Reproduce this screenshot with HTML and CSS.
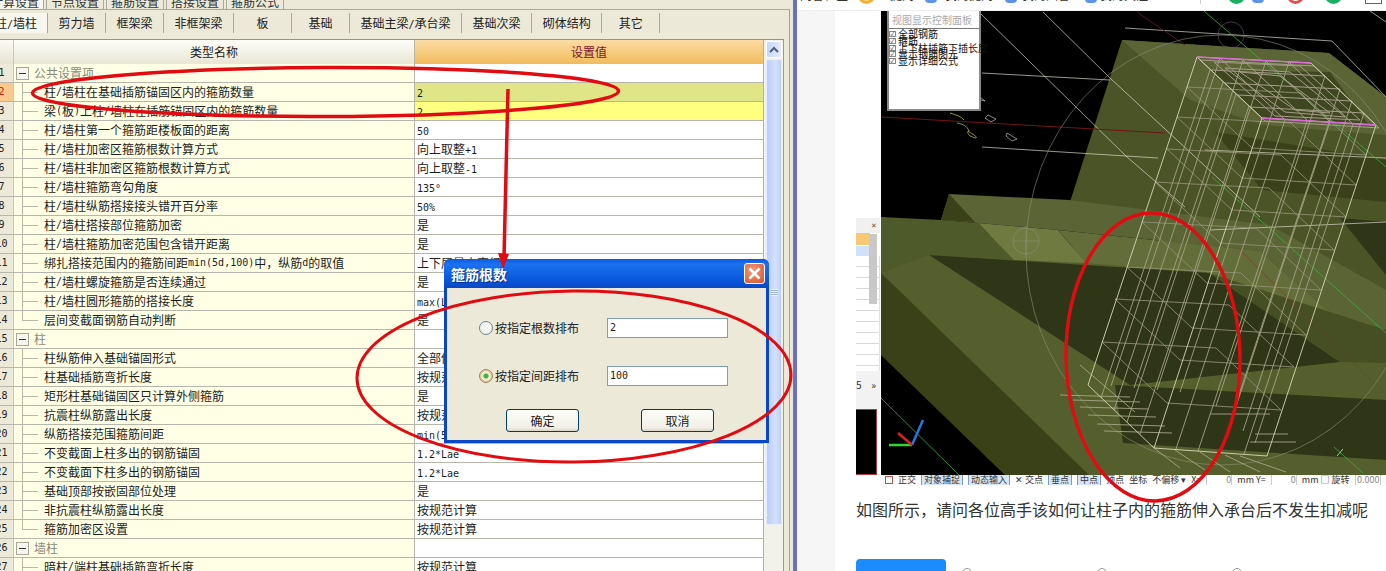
FILE: index.html
```html
<!DOCTYPE html>
<html lang="zh">
<head>
<meta charset="utf-8">
<title>箍筋根数</title>
<link rel="stylesheet" href="styles.css">
</head>
<body>
<div class="page">
  <section class="app">
    <nav class="top-tabs">
      <span class="top-tab on">计算设置</span><span class="top-tab">节点设置</span><span class="top-tab">箍筋设置</span><span class="top-tab">搭接设置</span><span class="top-tab">箍筋公式</span>
    </nav>
    <div class="pane">
      <nav class="sub-tabs">
        <span class="sub-tab on">柱<i class="lat">/</i>墙柱</span><span class="sub-tab">剪力墙</span><span class="sub-tab">框架梁</span><span class="sub-tab">非框架梁</span><span class="sub-tab">板</span><span class="sub-tab">基础</span><span class="sub-tab">基础主梁<i class="lat">/</i>承台梁</span><span class="sub-tab">基础次梁</span><span class="sub-tab">砌体结构</span><span class="sub-tab">其它</span>
      </nav>
      <div class="frame">
        <div class="grid-wrap">
          <div class="row head"><div class="num"></div><div class="name">类型名称</div><div class="val">设置值</div></div>
          <div class="row group"><div class="num">1</div><div class="name"><b class="box"></b>公共设置项</div><div class="val"></div></div>
          <div class="row sel"><div class="num">2</div><div class="name"><b class="tree"></b>柱<i class="lat">/</i>墙柱在基础插筋锚固区内的箍筋数量</div><div class="val"><i class="lat">2</i></div></div>
          <div class="row edit"><div class="num">3</div><div class="name"><b class="tree"></b>梁<i class="lat">(</i>板<i class="lat">)</i>上柱<i class="lat">/</i>墙柱在插筋锚固区内的箍筋数量</div><div class="val"><i class="lat">2</i></div></div>
          <div class="row"><div class="num">4</div><div class="name"><b class="tree"></b>柱<i class="lat">/</i>墙柱第一个箍筋距楼板面的距离</div><div class="val"><i class="lat">50</i></div></div>
          <div class="row"><div class="num">5</div><div class="name"><b class="tree"></b>柱<i class="lat">/</i>墙柱加密区箍筋根数计算方式</div><div class="val">向上取整<i class="lat">+1</i></div></div>
          <div class="row"><div class="num">6</div><div class="name"><b class="tree"></b>柱<i class="lat">/</i>墙柱非加密区箍筋根数计算方式</div><div class="val">向上取整<i class="lat">-1</i></div></div>
          <div class="row"><div class="num">7</div><div class="name"><b class="tree"></b>柱<i class="lat">/</i>墙柱箍筋弯勾角度</div><div class="val"><i class="lat">135°</i></div></div>
          <div class="row"><div class="num">8</div><div class="name"><b class="tree"></b>柱<i class="lat">/</i>墙柱纵筋搭接接头错开百分率</div><div class="val"><i class="lat">50%</i></div></div>
          <div class="row"><div class="num">9</div><div class="name"><b class="tree"></b>柱<i class="lat">/</i>墙柱搭接部位箍筋加密</div><div class="val">是</div></div>
          <div class="row"><div class="num">10</div><div class="name"><b class="tree"></b>柱<i class="lat">/</i>墙柱箍筋加密范围包含错开距离</div><div class="val">是</div></div>
          <div class="row"><div class="num">11</div><div class="name"><b class="tree"></b>绑扎搭接范围内的箍筋间距<i class="lat">min(5d,100)</i>中，纵筋<i class="lat">d</i>的取值</div><div class="val">上下层最小直径</div></div>
          <div class="row"><div class="num">12</div><div class="name"><b class="tree"></b>柱<i class="lat">/</i>墙柱螺旋箍筋是否连续通过</div><div class="val">是</div></div>
          <div class="row"><div class="num">13</div><div class="name"><b class="tree"></b>柱<i class="lat">/</i>墙柱圆形箍筋的搭接长度</div><div class="val"><i class="lat">max(Lae,300)</i></div></div>
          <div class="row"><div class="num">14</div><div class="name"><b class="tree last"></b>层间变截面钢筋自动判断</div><div class="val">是</div></div>
          <div class="row group"><div class="num">15</div><div class="name"><b class="box"></b>柱</div><div class="val"></div></div>
          <div class="row"><div class="num">16</div><div class="name"><b class="tree"></b>柱纵筋伸入基础锚固形式</div><div class="val">全部伸入基础底</div></div>
          <div class="row"><div class="num">17</div><div class="name"><b class="tree"></b>柱基础插筋弯折长度</div><div class="val">按规范计算</div></div>
          <div class="row"><div class="num">18</div><div class="name"><b class="tree"></b>矩形柱基础锚固区只计算外侧箍筋</div><div class="val">是</div></div>
          <div class="row"><div class="num">19</div><div class="name"><b class="tree"></b>抗震柱纵筋露出长度</div><div class="val">按规范计算</div></div>
          <div class="row"><div class="num">20</div><div class="name"><b class="tree"></b>纵筋搭接范围箍筋间距</div><div class="val"><i class="lat">min(5d,100)</i></div></div>
          <div class="row"><div class="num">21</div><div class="name"><b class="tree"></b>不变截面上柱多出的钢筋锚固</div><div class="val"><i class="lat">1.2*Lae</i></div></div>
          <div class="row"><div class="num">22</div><div class="name"><b class="tree"></b>不变截面下柱多出的钢筋锚固</div><div class="val"><i class="lat">1.2*Lae</i></div></div>
          <div class="row"><div class="num">23</div><div class="name"><b class="tree"></b>基础顶部按嵌固部位处理</div><div class="val">是</div></div>
          <div class="row"><div class="num">24</div><div class="name"><b class="tree"></b>非抗震柱纵筋露出长度</div><div class="val">按规范计算</div></div>
          <div class="row"><div class="num">25</div><div class="name"><b class="tree last"></b>箍筋加密区设置</div><div class="val">按规范计算</div></div>
          <div class="row group"><div class="num">26</div><div class="name"><b class="box"></b>墙柱</div><div class="val"></div></div>
          <div class="row"><div class="num">27</div><div class="name"><b class="tree"></b>暗柱<i class="lat">/</i>端柱基础插筋弯折长度</div><div class="val">按规范计算</div></div>
        </div>
        <div class="scrollbar">
          <div class="sb-btn"><svg width="12" height="8" viewBox="0 0 12 8"><path d="M2 6l4-4 4 4" fill="none" stroke="#4d6185" stroke-width="2"/></svg></div>
          <div class="sb-thumb"><span class="grip"></span></div>
        </div>
      </div>
    </div>
  </section>
  <div class="divider"></div>
  <section class="web">
    <header class="strip">
      <span class="s-text">问答社区</span><span class="s-dot orange"></span><span class="s-text">提问</span><span class="s-dot blue"></span><span class="s-text">我的提问</span><span class="s-dot blue"></span><span class="s-text">我的回答</span><span class="s-dot blue"></span><span class="s-text">我的关注</span><span class="s-rule"></span><span class="s-dot green"></span><span class="s-dot blue"></span><span class="s-dot red"></span><span class="s-dot green"></span><span class="s-dot grey"></span>
    </header>
    <div class="web-body">
      <aside class="gutter"></aside>
      <main class="content">
        <div class="shot">
          <div class="mini">
            <div class="mini-tools"><span>✕</span></div>
            <div class="mini-head"></div>
            <div class="mini-sel"></div>
            <div class="mini-list"><span class="mini-sb"></span></div>
            <div class="mini-foot"><span>5</span><span>»</span></div>
            <div class="mini-view"></div>
          </div>
          <div class="scene">
            <svg class="scene-svg" viewBox="880 11 506 464" width="506" height="464" aria-hidden="true">
              <defs>
                <path id="hoop" d="M1197 57L1311 63L1376 125L1262 118Z"/>
                <path id="cross" d="M1220 58L1285 120M1243 60L1308 121M1266 61L1330 122M1289 62L1353 124M1211 70L1325 76M1225 83L1340 89M1238 95L1352 101M1250 107L1364 113"/>
              </defs>
              <rect x="880" y="11" width="506" height="464" fill="#000"/>
              <rect x="880" y="11" width="1" height="464" fill="#fff"/>
              <polygon points="1122,40 1329,53 1386,97 1386,330 1069,205" fill="#4b5426"/>
              <polygon points="1122,40 1329,53 1386,97 1386,135 1262,125 1190,100" fill="#5a6434"/>
              <polygon points="1210,70 1330,72 1368,124 1262,118" fill="#3f4721"/>
              <polygon points="1215,132 1386,160 1386,202 1262,190" fill="#39401a"/>
              <polygon points="881,217 1386,300 1386,475 881,475" fill="#555f2d"/>
              <polygon points="949,194 1069,200 1270,225 1386,290 1386,363 1260,251 1058,230 978,223 941,220" fill="#5a6434"/>
              <polygon points="949,194 941,220 975,222" fill="#3a4119"/>
              <polygon points="881,217 941,220 978,223 1014,260 929,255 881,273" fill="#4f5a2a"/>
              <polygon points="978,223 1058,230 1086,263 1014,260" fill="#6f7a40"/>
              <polygon points="1058,230 1260,251 1386,363 1209,273 1086,263" fill="#626d39"/>
              <polygon points="1340,218 1386,222 1386,275" fill="#2f3517"/>
              <polygon points="881,273 881,355 1005,475 1089,475" fill="#3a4119"/>
              <polygon points="881,355 1005,475 881,475" fill="#000"/>
              <polygon points="929,255 1209,273 1340,362 1130,385" fill="#2f3517"/>
              <polygon points="1115,385 1386,400 1386,460 1123,443" fill="#2f3517"/>
              <polygon points="1209,273 1386,330 1386,363 1340,362" fill="#464f23"/>
              <g fill="none" stroke="#d8d8c8" stroke-width=".7">
                <path d="M980 13L1127 157L1185 207"/>
                <path d="M1043 12L1110 78L1260 217"/>
                <path d="M1125 28L1332 41L1386 97"/>
                <path d="M982 73L1110 80"/>
                <path d="M982 147L1158 158"/>
                <path d="M1210 230L1386 222"/>
                <path d="M1205 150L1386 158"/>
                <path d="M1370 11L1386 22"/>
              </g>
              <path d="M881 117L1165 133" stroke="#6e1616" fill="none"/>
              <path d="M1137 12L1185 45" stroke="#4a1a2a" fill="none"/>
              <path d="M1240 250L1386 395" stroke="#7a3a20" stroke-width=".6" fill="none"/>
              <path d="M1204 11L1386 167M1212 177L1386 333M1334 447L1363 473M881 398L959 475" stroke="#3fae3f" stroke-width=".8" fill="none"/>
              <path d="M1337 456L1343 449" stroke="#9ad29a" fill="none"/>
              <g fill="none" stroke="#8f9078" stroke-width=".6">
                <ellipse cx="1222" cy="250" rx="196" ry="215"/>
                <circle cx="1026" cy="241" r="13"/>
                <path d="M1026 226V256M1014 241H1038"/>
              </g>
              <circle cx="1231" cy="35" r="13" fill="none" stroke="#6c5c70" stroke-width=".6"/>
              <g fill="none" stroke="#d8d060" stroke-width=".7"><path d="M950 113c6 2 11 3 14 7M957 123c6 1 10 3 12 8M968 131c-1 4 3 6 8 7 2-1-4-4-8-7"/></g>
              <g fill="none" stroke="#ddd" stroke-width=".6"><path d="M980 97l5 4-4-1M988 115l8 4-5 3-6-4zM1007 133l10 6-5 2-6-5z"/></g>
              <g class="rebar-a">
                <use href="#hoop" transform="translate(-10 30)"/><use href="#hoop" transform="translate(-20 60)"/>
                <use href="#hoop" transform="translate(-30 92)"/><use href="#hoop" transform="translate(-42 125)"/>
                <use href="#hoop" transform="translate(-55 165)"/><use href="#hoop" transform="translate(-70 210)"/>
                <use href="#hoop" transform="translate(-82 242)"/><use href="#hoop" transform="translate(-95 285)"/>
              </g>
              <g class="rebar-b">
                <path d="M1210 70L1101 398M1223 82L1114 410M1236 94L1127 422M1249 106L1140 434M1285 120L1176 449M1307 121L1198 451M1330 122L1221 452M1353 124L1244 454M1220 58L1111 386M1243 60L1134 388M1266 61L1157 390M1289 62L1180 392M1325 76L1216 406M1340 89L1231 419M1352 101L1243 431M1364 113L1255 443"/>
                <path d="M1080 365L1135 412M1060 395L1130 397M1073 400L1140 402M1080 407L1148 409M1088 415L1156 417M1097 424L1165 426M1104 431L1172 433M1154 448L1180 468M1175 450L1205 470M1200 452L1230 472M1225 455L1260 472M1240 456L1286 472M1255 434L1288 434M1250 442L1296 442M1210 414L1270 414"/>
              </g>
              <g class="rebar-top">
                <use href="#hoop" transform="translate(3 3)"/><use href="#cross"/>
                <path d="M1214 62L1300 66L1360 120L1275 116ZM1225 68L1290 72L1345 117L1285 112ZM1240 72L1280 76L1330 113L1295 110Z"/>
              </g>
              <path d="M1197 57L1262 118L1376 125M1197 57L1088 385L1154 448L1267 456L1376 125M1262 118L1154 448M1197 57L1311 63L1376 125" fill="none" stroke="#d8d8b8" stroke-width=".9"/>
              <path d="M1197 57L1311 63M1262 118L1376 125" stroke="#d96ad9" stroke-width="1.300" fill="none"/>
              <path d="M912 445L923 420" stroke="#1f7be0" stroke-width="2.500"/>
              <path d="M912 445H889" stroke="#2ed42e" stroke-width="2.500"/>
              <path d="M912 445L898 433" stroke="#e02020" stroke-width="2.500"/>
            </svg>
            <div class="ctl">
              <div class="ctl-title">视图显示控制面板</div>
              <ul class="ctl-list">
                <li><b class="chk"></b>全部钢筋</li>
                <li><b class="chk"></b>箍筋</li>
                <li><b class="chk"></b>上下柱插筋下插长度</li>
                <li><b class="chk"></b>显示钢筋图元</li>
                <li><b class="chk"></b>显示详细公式</li>
              </ul>
            </div>
          </div>
        </div>
        <div class="status">
          <span class="st-ico"></span><span>正交</span><span class="hl">对象捕捉</span><span class="hl">动态输入</span><span>✕ 交点</span><span class="hl">垂点</span><span class="hl">中点</span><span>顶点</span><span>坐标</span><span>不偏移 ▾</span><span>X=</span><span class="fld">0</span><span>mm Y=</span><span class="fld">0</span><span>mm □ 旋转</span><span class="fld">0.000</span>
        </div>
        <p class="question">如图所示，请问各位高手该如何让柱子内的箍筋伸入承台后不发生扣减呢</p>
        <div class="actions">
          <span class="answer"></span><span class="a-dot"></span><span class="a-dot"></span><span class="a-dot"></span>
        </div>
      </main>
    </div>
  </section>

  <div class="dialog">
    <div class="dlg-title"><span>箍筋根数</span><span class="dlg-close"><svg width="13" height="13" viewBox="0 0 13 13"><path d="M1.5 1.5l10 10M11.5 1.5l-10 10" stroke="#fff" stroke-width="2.600"/></svg></span></div>
    <div class="dlg-body">
      <div class="dlg-row"><span class="radio"></span><label>按指定根数排布</label><span class="input">2</span></div>
      <div class="dlg-row"><span class="radio on"></span><label>按指定间距排布</label><span class="input">100</span></div>
      <div class="dlg-btns"><span class="btn">确定</span><span class="btn">取消</span></div>
    </div>
  </div>

  <svg class="ink" viewBox="0 0 1386 571" width="1386" height="571" aria-hidden="true">
    <g fill="none" stroke="#e00c12" stroke-width="3.500">
      <ellipse cx="325.500" cy="92" rx="293" ry="24.500" transform="rotate(-.2 325 92)"/>
      <ellipse cx="574" cy="376.500" rx="217" ry="85.500" stroke-width="3" transform="rotate(-.5 574 376)"/>
      <ellipse cx="1153" cy="357" rx="87" ry="144" transform="rotate(-1 1153 357)"/>
      <path d="M508 89L504 258"/>
    </g>
    <polygon points="498,253 509,254 503,269" fill="#e00c12"/>
  </svg>
</div>
</body>
</html>
```
FILE: styles.css
```css
* { box-sizing: border-box; }
html, body { margin: 0; padding: 0; background: #fff; }
i, b { font-style: normal; font-weight: normal; }
.page {
  position: relative; display: flex; width: 1386px; height: 571px; overflow: hidden;
  font: 12px/18px "Noto Sans CJK SC", sans-serif; color: #1c1c1c;
}
.lat { font-family: "DejaVu Sans Mono", "Liberation Mono", monospace; font-size: 10px; }

/* left application */
.app { flex: none; width: 793px; background: #ece9d8; overflow: hidden; }
.top-tabs { display: flex; gap: 2px; height: 9px; margin-left: -14px; overflow: hidden; }
.top-tab {
  flex: none; width: 58px; height: 9px; line-height: 4px; text-align: center; color: #333;
  background: #ece9d8; border: 1px solid #aca899; border-top: 0; border-bottom: 0;
}
.top-tab.on { background: #f7f6ef; }
.pane { height: 562px; width: 790px; border-top: 1px solid #aca899; border-right: 1px solid #a0a09a; background: #ece9d8; }
.sub-tabs { display: flex; height: 29px; padding-top: 3px; margin-left: -11px; }
.sub-tab {
  flex: none; min-width: 58px; height: 20px; padding: 0 10.500px; line-height: 19px; text-align: center;
  border-right: 1px solid #aca899; color: #222;
}
.sub-tab.on { background: #f7f6ef; width: 59px; min-width: 59px; padding: 0 0 0 6px; text-align: left; }
.frame { display: flex; width: 784px; height: 540px; border-top: 1px solid #8f9498; border-right: 1px solid #9a9a96; }
.grid-wrap { flex: none; width: 764px; border-right: 1px solid #b0b0b0; }
.row {
  display: grid; grid-template-columns: 14px 401px 348px; height: 19px;
  border-bottom: 1px solid #b6b6aa; line-height: 18px;
}
.num {
  width: 24px; margin-left: -10px; text-align: center; background: #ece9d8; color: #222;
  font-family: "DejaVu Sans Mono", monospace; font-size: 10px;
  border-right: 1px solid #c8c8bc;
}
.name {
  display: flex; padding-left: 8px; background: #ffffe6; border-right: 1px solid #b6b6aa; white-space: pre; overflow: hidden;
}
.val { padding-left: 2px; background: #fff; white-space: nowrap; overflow: hidden; }
.row.head { height: 24px; line-height: 23px; border-bottom: 0; }
.head .num { background: linear-gradient(#fbfaf5, #e6e3d2); }
.head .name { display: block; padding: 0; text-align: center; background: linear-gradient(#fdfdf8, #e9e6d4); }
.head .val { padding: 0; text-align: center; color: #7d1530; background: linear-gradient(#fbdca4, #f2bb5c); }
.sel .num { background: #f9c88c; color: #b3261a; }
.sel .val { background: #e0e687; }
.edit .val { background: #ffff80; }
.group .name { padding-left: 2px; color: #8a8a78; }
.box {
  flex: none; width: 13px; height: 13px; margin: 3px 5px 0 0; border: 1px solid #a8a898; background:
    linear-gradient(#333, #333) center / 7px 1px no-repeat, #f6f6ee;
}
.tree {
  flex: none; width: 22px; height: 18px; background:
    linear-gradient(#b8b8a8, #b8b8a8) 0 0 / 1px 100% no-repeat,
    linear-gradient(#b8b8a8, #b8b8a8) 0 9px / 16px 1px no-repeat;
}
.tree.last { background:
    linear-gradient(#b8b8a8, #b8b8a8) 0 0 / 1px 10px no-repeat,
    linear-gradient(#b8b8a8, #b8b8a8) 0 9px / 16px 1px no-repeat;
}
.scrollbar { flex: none; width: 19px; padding: 1px 1px 0 2px; background: #f2f1ea; }
.sb-btn {
  display: flex; align-items: center; justify-content: center; height: 17px; border: 1px solid #fff; border-radius: 2px;
  background: linear-gradient(90deg, #c6d6f9, #e4ecfd);
}
.sb-thumb {
  display: flex; align-items: center; justify-content: center; height: 466px; margin-top: 1px; border-radius: 2px;
  background: linear-gradient(90deg, #b9cdf7, #d4e1fc 60%, #bccff8); border: 1px solid #e8eefc;
}
.grip { width: 7px; height: 7px; background: repeating-linear-gradient(#eef3ff 0 1px, #9fb3dd 1px 2px); }

.divider { flex: none; width: 4px; background: #6a71c2; }

/* right web page */
.web { flex: 1; min-width: 0; display: flex; flex-direction: column; background: #fff; }
.strip {
  flex: none; display: grid; height: 11px; padding-left: 3px; overflow: hidden; border-bottom: 1px solid #eeeeee;
  grid-template-columns: 58px 32px 35px 20px 60px 17px 63px 15px 100px 28px 24px 35px 38px 40px 1fr;
}
.s-text { margin-top: -14px; line-height: 18px; font-size: 12px; color: #333; white-space: nowrap; }
.s-dot { width: 17px; height: 17px; margin-top: -13px; border-radius: 50%; border: 3px solid #888; }
.s-dot.orange { border-color: #f0b030; background: #f8d890; }
.s-dot.blue { border-color: #5b94e8; width: 12px; height: 16px; border-radius: 4px; }
.s-dot.green { border-color: #18b060; background: #18b060; }
.s-dot.red { border-color: #e05050; }
.s-dot.grey { border: 1px solid #666; border-radius: 0; }
.s-rule { width: 1px; height: 4px; background: #ccc; }
.web-body { flex: 1; display: flex; min-height: 0; }
.gutter { flex: none; width: 38px; background: #f6f6f6; }
.content { flex: 1; min-width: 0; padding-left: 21px; background: #fff; }
.shot { display: flex; height: 464px; }
.mini { flex: none; width: 24px; display: flex; flex-direction: column; padding-top: 207px; }
.mini-tools { height: 15px; text-align: right; font-size: 7px; line-height: 14px; color: #555; background: #f0f0f0; padding-right: 3px; }
.mini-head { height: 12px; width: 14px; background: #f7c975; }
.mini-sel { height: 10px; width: 14px; background: #cfe2f8; margin-top: 1px; }
.mini-list {
  position: relative; height: 116px; background:
    repeating-linear-gradient(#fff 0 10px, #d8d8d8 10px 11px);
  border-right: 1px solid #e0e0e0;
}
.mini-sb { position: absolute; right: 2px; top: -22px; width: 8px; height: 70px; background: #c8c8c8; }
.mini-foot { display: flex; justify-content: space-between; height: 38px; padding: 5px 4px 0 0; font-size: 10px; background: #f2f2f2; color: #333; }
.mini-view { height: 66px; width: 21px; background: #000; border: 1px solid #b0393f; border-left: 0; }
.scene { position: relative; flex: none; width: 506px; height: 464px; }
.scene-svg { display: block; }
.rebar-a { fill: none; stroke: #8f8f72; stroke-width: .9; }
.rebar-b { fill: none; stroke: #a5a584; stroke-width: .9; }
.rebar-top { fill: none; stroke: #a59d88; stroke-width: 1; }
.ctl { position: absolute; left: 7px; top: 0; width: 94px; height: 100px; background: #fff; border: 2px solid #8a8a8a; border-top: 0; }
.ctl-title { height: 18px; padding-left: 3px; font-size: 10px; line-height: 18px; color: #aaa; border-bottom: 1px solid #777; }
.ctl-list { margin: 0; padding: 2px 0 0 0; list-style: none; font-size: 10px; line-height: 6.800px; color: #111; }
.ctl-list li { display: flex; height: 6.800px; white-space: nowrap; }
.chk {
  flex: none; width: 7px; height: 6px; margin: 0 2px 0 0; border: 1px solid #888; background: #fff;
  font-size: 6px; line-height: 4px; text-align: center; color: #333;
}
.chk::after { content: "✓"; }
.status {
  display: flex; align-items: center; gap: 5px; height: 10px; margin-left: 24px; padding-left: 5px; overflow: hidden;
  font-size: 9px; line-height: 10px; white-space: nowrap; color: #333; background: #fbfbfb;
}
.st-ico { flex: none; width: 8px; height: 8px; border: 1px solid #c05050; }
.status .hl { background: #d6e6f8; border: 1px solid #7c9cc4; padding: 0 2px; }
.status .fld { min-width: 26px; text-align: right; border: 1px solid #ccc; background: #fff; color: #888; }
.question { margin: 12px 0 0; font-size: 16px; line-height: 24px; color: #333; white-space: nowrap; }
.actions { display: flex; margin-top: 38px; }
.answer { flex: none; width: 90px; height: 40px; background: #1a8cff; border-radius: 4px; }
.a-dot { flex: none; width: 10px; height: 10px; margin: 9px 0 0 16px; border: 1px solid #999; border-radius: 50%; }
.a-dot + .a-dot { margin-left: 125px; }

/* dialog */
.dialog {
  position: absolute; left: 444px; top: 259px; width: 325px; height: 184px; display: flex; flex-direction: column;
  background: #0a46c8; border: 3px solid #0a46c8; border-top: 0; border-radius: 6px 6px 0 0;
}
.dlg-title {
  display: flex; align-items: center; justify-content: space-between; flex: none; height: 29px; margin: 0 -3px; padding: 0 4px 0 7px;
  border-radius: 6px 6px 0 0; color: #fff; font-size: 14px; font-weight: 700; text-shadow: 1px 1px #0a2f90;
  background: linear-gradient(#0a5ae0, #1c72f0 18%, #0a58dc 70%, #0848c4);
}
.dlg-close {
  display: flex; align-items: center; justify-content: center; width: 21px; height: 21px;
  border: 1px solid #fff; border-radius: 3px; background: radial-gradient(circle at 40% 35%, #f29a78, #d5532f);
}
.dlg-body { flex: 1; padding: 30px 0 0 32px; background: #ece9d8; }
.dlg-row { display: flex; align-items: center; height: 20px; margin-bottom: 28px; font-size: 12px; }
.radio {
  flex: none; width: 14px; height: 14px; margin-right: 2px; border-radius: 50%; border: 1px solid #6a7f94; background: #f4f4ee;
}
.radio.on { background: radial-gradient(circle, #3fb23f 0 2px, #f0ead0 3px); border-color: #8c8a60; box-shadow: inset 0 0 0 1px #e6c48a; }
.dlg-row label { flex: none; width: 112px; color: #222; }
.input {
  flex: none; width: 121px; height: 20px; padding-left: 2px; line-height: 17px; background: #fff; border: 1px solid #7f9db9;
  font-family: "DejaVu Sans Mono", monospace; font-size: 10px;
}
.dlg-btns { display: flex; gap: 62px; margin: -5px 0 0 27px; }
.btn {
  flex: none; width: 73px; height: 23px; line-height: 21px; text-align: center; border: 1px solid #003c74; border-radius: 3px;
  background: linear-gradient(#fdfdf9, #f1efe6 85%, #d8d4c4); color: #222;
}

.ink { position: absolute; left: 0; top: 0; pointer-events: none; }
```
